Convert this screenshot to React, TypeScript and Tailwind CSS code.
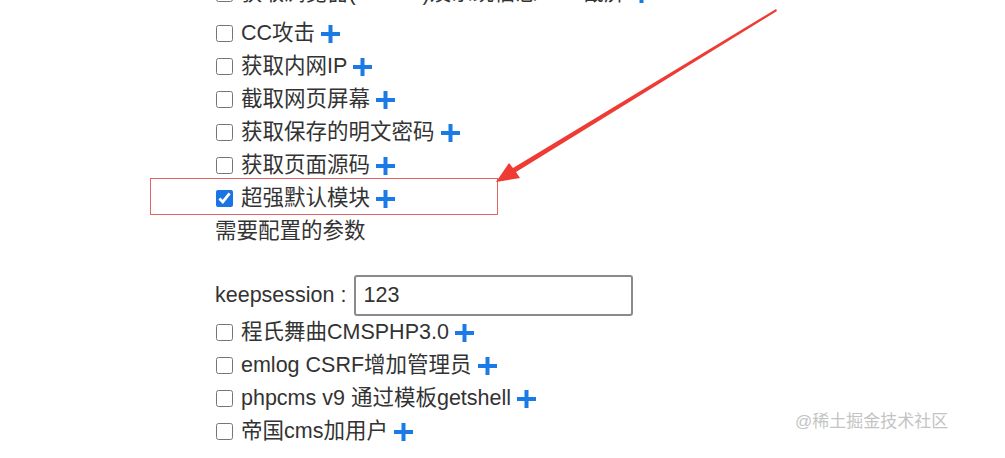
import React from 'react'

const Plus = () => (
    <svg width="19" height="18" viewBox="0 0 19 18" className="inline-block ml-[6px] shrink-0">
        <rect x="0" y="7" width="19" height="4" fill="#1a7ae6" />
        <rect x="7.5" y="0" width="4" height="18" fill="#1a7ae6" />
    </svg>
)

const Row = ({ label, checked }: { label: string; checked?: boolean }) => (
    <label className="flex items-center h-[33px] whitespace-nowrap">
        <input
            type="checkbox"
            defaultChecked={checked}
            className="w-[17px] h-[17px] m-0 mr-[8px] accent-[#1b74e4]"
        />
        <span>{label}</span>
        <Plus />
    </label>
)

const top = ['CC攻击', '获取内网IP', '截取网页屏幕', '获取保存的明文密码', '获取页面源码']
const bottom = ['程氏舞曲CMSPHP3.0', 'emlog CSRF增加管理员', 'phpcms v9 通过模板getshell', '帝国cms加用户']

const App = () => {
    return (
        <div
            className="relative w-[1005px] h-[458px] overflow-hidden bg-white text-[#333] text-[21.5px]"
            style={{ fontFamily: '"Liberation Sans", "Noto Sans CJK SC", sans-serif' }}
        >
            <div className="flex flex-col pl-[216px] mt-[-16px]">
                {/* row cut off by the top edge of the screenshot */}
                <div className="h-[33px] overflow-hidden">
                    <div className="-mt-[7px]">
                        <Row label="获取浏览器(Cookie)及系统信息 · · · 截屏" />
                    </div>
                </div>
                {top.map((t) => (
                    <Row key={t} label={t} />
                ))}
                <Row label="超强默认模块" checked />
                <div className="flex items-center h-[33px] -ml-[1px]">需要配置的参数</div>
                <div className="h-[27px]" />
                <div className="flex items-center h-[41px] -ml-[1px]">
                    <span>keepsession :</span>
                    <input
                        defaultValue="123"
                        className="ml-[8px] w-[279px] h-[41px] border-2 border-[#8a8a8a] rounded-[3px] px-[7px] text-[21.5px] text-[#333] outline-none"
                    />
                </div>
                {bottom.map((t) => (
                    <Row key={t} label={t} />
                ))}
            </div>

            {/* annotation box */}
            <div className="absolute left-[150px] top-[178px] w-[348px] h-[37px] border-[1.5px] border-[#e46464]" />

            {/* arrow */}
            <svg className="absolute left-0 top-0" width="1005" height="458">
                <polygon
                    points="496,182 509,163 513,168 776,9 777,11 516,172 520,178"
                    fill="#ee3b34"
                />
            </svg>

            <div className="absolute left-[795px] top-[409px] text-[17px] text-[#c4c4c4]">
                @稀土掘金技术社区
            </div>
        </div>
    )
}

export default App
